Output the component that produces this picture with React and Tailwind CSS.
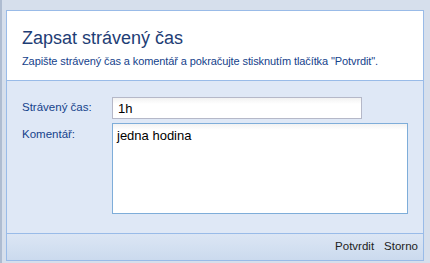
import React from 'react';

const font = { fontFamily: '"Liberation Sans", Arial, sans-serif' };

const App = () => {
  return (
    <div
      className="w-[430px] h-[263px] bg-[#d6dfec] border-l-2 border-[#aebcd1] pl-[4px] pt-[10px] pr-[6px] pb-[2px] box-border"
      style={font}
    >
      <div className="h-[251px] border border-[#99bbe8] flex flex-col bg-[#dfe8f6]">
        <div className="h-[70px] bg-white border-b border-[#99bbe8] px-[15px] pt-[16px]">
          <h1 className="text-[18px] leading-[22px] text-[#1e3d75]">Zapsat strávený čas</h1>
          <p className="mt-[5px] text-[11px] leading-[14px] text-[#15428b] tracking-[-0.1px]">
            Zapište strávený čas a komentář a pokračujte stisknutím tlačítka "Potvrdit".
          </p>
        </div>

        <div className="flex-1 pl-[15px] pt-[16px] flex flex-col gap-[4px]">
          <div className="flex items-center">
            <label className="w-[90px] text-[11.5px] text-[#15428b]">Strávený čas:</label>
            <input
              defaultValue="1h"
              className="w-[250px] h-[22px] border border-[#b5b8c8] bg-white px-[5px] text-[13px] text-black outline-none"
              style={{ background: 'linear-gradient(#f2f2f2, #ffffff 6px)' }}
            />
          </div>
          <div className="flex items-start">
            <label className="w-[90px] text-[11.5px] text-[#15428b] pt-[3px]">Komentář:</label>
            <textarea
              defaultValue="jedna hodina"
              className="w-[296px] h-[91px] border border-[#7eadd9] bg-white px-[4px] py-[2px] text-[13px] text-black outline-none resize-none"
              style={{ background: 'linear-gradient(#f2f2f2, #ffffff 6px)' }}
            />
          </div>
        </div>

        <div className="h-[27px] border-t border-[#99bbe8] bg-gradient-to-b from-[#dce6f4] to-[#cbdaee] flex items-center justify-end gap-[10px] pr-[5px]">
          <button className="text-[11.5px] text-[#222]">Potvrdit</button>
          <button className="text-[11.5px] text-[#222]">Storno</button>
        </div>
      </div>
    </div>
  );
};

export default App;
